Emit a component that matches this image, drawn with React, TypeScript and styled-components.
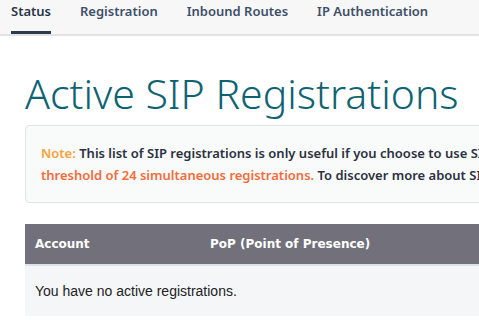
import React from "react";
import styled, { createGlobalStyle } from "styled-components";

const GlobalStyle = createGlobalStyle`
  html, body {
    margin: 0;
    padding: 0;
    background: #ffffff;
    overflow: hidden;
  }
  * {
    box-sizing: border-box;
  }
`;

const TabBar = styled.nav`
  display: flex;
  height: 36px;
  padding-left: 11px;
  background: #f7f7f7;
  border-bottom: 2px solid #e3e3e3;
`;

const Tab = styled.a<{ $active?: boolean }>`
  display: flex;
  align-items: flex-start;
  padding-top: 2px;
  margin-right: 29px;
  font-family: "Noto Sans", "Open Sans", sans-serif;
  font-size: 13px;
  font-weight: 600;
  color: ${(p) => (p.$active ? "#2a3547" : "#3e4f6a")};
  text-decoration: none;
  border-bottom: 3px solid ${(p) => (p.$active ? "#2c3a50" : "transparent")};
  height: 34px;
  cursor: pointer;
`;

const Main = styled.main`
  width: 900px;
  padding: 0 0 0 25px;
`;

const Title = styled.h1`
  margin: 29px 0 4px;
  font-family: "Noto Sans", "Open Sans", sans-serif;
  font-weight: 300;
  font-size: 41px;
  line-height: 56px;
  color: #0e6373;
`;

const NoteBox = styled.div`
  border: 1px solid #e2e4e6;
  border-radius: 4px;
  background: #f9fafa;
  padding: 16px 15px 16px;
  font-family: "Noto Sans", "Open Sans", sans-serif;
  font-size: 13px;
  font-weight: 600;
  line-height: 22px;
  color: #2b3140;
`;

const Hl = styled.span<{ $tone: "label" | "alert" }>`
  color: ${(p) => (p.$tone === "label" ? "#f7a23a" : "#f36c3b")};
`;

const Table = styled.table`
  margin-top: 21px;
  width: 100%;
  border-collapse: separate;
  border-spacing: 0;
`;

const HeadCell = styled.th<{ $w?: number }>`
  background: #72717b;
  color: #ffffff;
  text-align: left;
  height: 42px;
  padding: 0 10px;
  width: ${(p) => (p.$w ? `${p.$w}px` : "auto")};
  font-family: "DejaVu Sans", Verdana, sans-serif;
  font-size: 12px;
  font-weight: 700;
  border-bottom: 2px solid #dde3e9;
`;

const BodyCell = styled.td`
  background: #f4f6f8;
  height: 50px;
  padding: 0 10px;
  font-family: "Liberation Sans", Arial, sans-serif;
  font-size: 14px;
  color: #222222;
`;

export default function App() {
  return (
    <>
      <GlobalStyle />
      <TabBar>
        <Tab $active>Status</Tab>
        <Tab>Registration</Tab>
        <Tab>Inbound Routes</Tab>
        <Tab>IP Authentication</Tab>
      </TabBar>
      <Main>
        <Title>Active SIP Registrations</Title>
        <NoteBox>
          <Hl $tone="label">Note:</Hl> This list of SIP registrations is only
          useful if you choose to use SIP registrations. Your account has a
          <br />
          <Hl $tone="alert">threshold of 24 simultaneous registrations.</Hl> To
          discover more about SIP registrations, visit our help center.
        </NoteBox>
        <Table>
          <thead>
            <tr>
              <HeadCell $w={175}>Account</HeadCell>
              <HeadCell>PoP (Point of Presence)</HeadCell>
            </tr>
          </thead>
          <tbody>
            <tr>
              <BodyCell colSpan={2}>You have no active registrations.</BodyCell>
            </tr>
          </tbody>
        </Table>
      </Main>
    </>
  );
}
